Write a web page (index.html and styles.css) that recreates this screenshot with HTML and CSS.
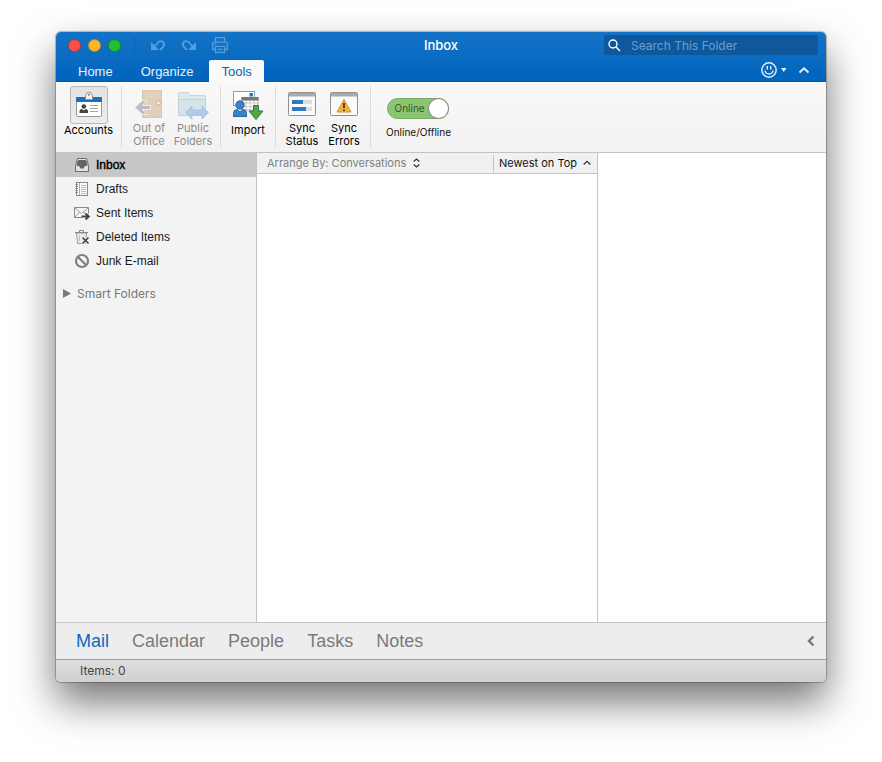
FILE: index.html
```html
<!DOCTYPE html>
<html lang="en">
<head>
  <meta charset="UTF-8">
  <title>Inbox</title>
  <meta name="viewport" content="width=device-width, initial-scale=1.0">
  <link rel="stylesheet" href="styles.css">
</head>
<body>
  <div class="window">

    <!-- Title bar -->
    <header class="header">
      <div class="titlebar">
        <div class="titlebar-left">
          <button class="light red" aria-label="Close"></button>
          <button class="light yellow" aria-label="Minimize"></button>
          <button class="light green" aria-label="Zoom"></button>
          <span class="divider"></span>
          <button class="quick" aria-label="Undo">
            <svg width="16" height="16" viewBox="0 0 16 16" fill="none" stroke="currentColor" stroke-width="1.800"><path d="M1 5V13H9Z" fill="currentColor" stroke="none"/><path d="M4 10 8 5.500Q10.500 3 13 5Q15.500 7.500 13 10L10 13"/></svg>
          </button>
          <button class="quick" aria-label="Redo">
            <svg width="16" height="16" viewBox="0 0 16 16" fill="none" stroke="currentColor" stroke-width="1.800"><path d="M15 5V13H7Z" fill="currentColor" stroke="none"/><path d="M12 10 8 5.500Q5.500 3 3 5Q.5 7.500 3 10L6 13"/></svg>
          </button>
          <button class="quick" aria-label="Print">
            <svg width="16" height="16" viewBox="0 0 16 16" fill="none" stroke="currentColor" stroke-width="1.3"><path d="M3.500 5V.7H12.500V5M3 12.500H.7V6.500Q.7 5.200 2 5.200H14Q15.300 5.200 15.300 6.500V12.500H13M3.500 9.300H12.500V15.300H3.500ZM5.500 12.300H10.500M2.500 7.300H4.500"/></svg>
          </button>
        </div>
        <h1 class="title">Inbox</h1>
        <label class="search">
          <svg width="13" height="13" viewBox="0 0 13 13" fill="none" stroke="#fff" stroke-width="1.4"><circle cx="5" cy="5" r="4"/><path d="M8 8 12 12"/></svg>
          <input type="search" aria-label="Search" placeholder="Search This Folder">
        </label>
      </div>
      <nav class="tabs">
        <button class="tab">Home</button>
        <button class="tab">Organize</button>
        <button class="tab active">Tools</button>
        <div class="tabs-right">
          <button class="feedback" aria-label="Feedback">
            <svg width="26" height="16" viewBox="0 0 26 16" fill="none" stroke="#e6f0fa" stroke-width="1.4"><circle cx="8" cy="8" r="7.200"/><path d="M4 8.500Q4.500 12 8 12T12 8.500M6.300 4V7.500M9.700 4V7.500"/><path d="M20 6H25.500L22.750 10Z" fill="#e6f0fa" stroke="none"/></svg>
          </button>
          <button class="collapse" aria-label="Collapse ribbon">
            <svg width="12" height="8" viewBox="0 0 12 8" fill="none" stroke="#e6f0fa" stroke-width="2"><path d="M1.500 6.500 6 2.300 10.500 6.500"/></svg>
          </button>
        </div>
      </nav>
    </header>

    <!-- Ribbon -->
    <div class="ribbon">
      <div class="group">
        <button class="tool accounts">
          <span class="tool-icon framed">
            <svg width="26" height="28" viewBox="0 0 26 28"><rect x=".5" y="6.500" width="25" height="19" rx="1.500" fill="#fff" stroke="#999"/><path d="M0 7Q0 6 1 6H25Q26 6 26 7V11H0Z" fill="#1c6fbd"/><path d="M9.500 8.500V4.500Q9.500 3.500 10.500 3.500Q10.500 1 13 1T15.500 3.500Q16.500 3.500 16.500 4.500V8.500Z" fill="#f4f4f4" stroke="#909090"/><circle cx="13" cy="3.800" r="1" fill="#777"/><circle cx="7.800" cy="15.500" r="2.300" fill="#444"/><path d="M3.500 22V20Q3.500 18 6 18L7.800 19.500 9.600 18Q12 18 12 20V22Z" fill="#444"/><path d="M14 14.500H22M14 17.500H22M14 20.500H22" stroke="#a5a5a5"/></svg>
          </span>
          <span>Accounts</span>
        </button>
      </div>
      <div class="group">
        <button class="tool" disabled>
          <span class="tool-icon">
            <svg width="30" height="32" viewBox="0 0 30 32"><path d="M8.500 2.500H27.500V29.500H8.500Z" fill="#e0d0b9" stroke="#d9c7ab"/><path d="M11 6H25M12 9H24" stroke="#eadfcd" stroke-dasharray="2 3"/><circle cx="24.500" cy="15" r="1.800" fill="#fff" stroke="#c3b69f"/><path d="M.8 19.500 8.500 12.500H12.500L8.500 17.500H16.500V21.500H8.500L12.500 26.500H8.500Z" fill="#b9bcc1" stroke="#f5f5f5" stroke-width=".8"/></svg>
          </span>
          <span>Out of<br>Office</span>
        </button>
        <button class="tool" disabled>
          <span class="tool-icon">
            <svg width="32" height="32" viewBox="0 0 32 32"><path d="M1.500 27.500V6Q1.500 4.500 3 4.500H11L13 7.500H27Q28.500 7.500 28.500 9V27.500Z" fill="#dde8ec" stroke="#c6d4da"/><path d="M1.500 27.500V11.500H28.500V27.500Z" fill="#d5e3ea" stroke="#c3d3dc"/><path d="M8.500 24.500 15 18V22H25V18L31.500 24.500 25 31V27H15V31Z" fill="#b0cce6" stroke="#9dbedc" stroke-width=".7"/></svg>
          </span>
          <span>Public<br>Folders</span>
        </button>
      </div>
      <div class="group">
        <button class="tool">
          <span class="tool-icon">
            <svg width="32" height="32" viewBox="0 0 32 32"><rect x="1.500" y="2.500" width="21" height="14" fill="#fff" stroke="#999"/><rect x="17.500" y="4" width="3.500" height="3.500" fill="#2b79c2"/><path d="M10 8.500H26V21H10Z" fill="#fff" stroke="#aaa"/><path d="M14 11V21M18 11V21M22 11V21M10 14H26M10 17.500H26" stroke="#c8c8c8"/><path d="M9.500 8H26.500V11.500H9.500Z" fill="#777"/><circle cx="8" cy="16" r="4.200" fill="#3b83c6" stroke="#2567a5"/><path d="M1.500 27.500V24.500Q1.500 20.500 5 20.500L8 23 11 20.500Q14.500 20.500 14.500 24.500V27.500Z" fill="#3b83c6" stroke="#2567a5"/><path d="M21.500 16.500H26.500V22H31L24 30.500 17 22H21.500Z" fill="#55a34d" stroke="#39793a"/></svg>
          </span>
          <span>Import</span>
        </button>
      </div>
      <div class="group sync">
        <button class="tool">
          <span class="tool-icon">
            <svg width="30" height="32" viewBox="0 0 30 32"><rect x="1.500" y="4.500" width="27" height="23" rx="1" fill="#fafafa" stroke="#919191"/><path d="M2 5H28V8.500H2Z" fill="#aaa"/><path d="M5 12H25V16H5ZM5 19H25V23H5Z" fill="#ddd"/><path d="M5 12H16V16H5ZM5 19H19V23H5Z" fill="#3278bd"/></svg>
          </span>
          <span>Sync<br>Status</span>
        </button>
        <button class="tool">
          <span class="tool-icon">
            <svg width="30" height="32" viewBox="0 0 30 32"><rect x="1.500" y="4.500" width="27" height="23" rx="1" fill="#fafafa" stroke="#919191"/><path d="M2 5H28V8.500H2Z" fill="#aaa"/><path d="M15 11.500 22 24H8Z" fill="#f2b540" stroke="#d18e2a" stroke-linejoin="round"/><path d="M15 15V20M15 21.500V23" stroke="#4a3518" stroke-width="1.800"/></svg>
          </span>
          <span>Sync<br>Errors</span>
        </button>
      </div>
      <div class="group online">
        <div class="switch">
          <input type="checkbox" id="online" checked>
          <span class="switch-text">Online</span>
        </div>
        <label for="online">Online/Offline</label>
      </div>
    </div>

    <!-- Folders, message list and reading pane -->
    <main class="content">
      <aside class="sidebar">
        <ul class="folders">
          <li><a href="#" class="folder selected">
            <svg width="16" height="16" viewBox="0 0 16 16"><path d="M3.500 1.500H12.500L14.500 9V14.500H1.500V9Z" fill="#e2e2e2" stroke="#6c6c6c"/><path d="M5 3H11Q12.500 3 12.700 5L13.200 9H11L9.500 11.500H6.500L5 9H2.800L3.300 5Q3.500 3 5 3Z" fill="#5f6468"/></svg>
            Inbox</a></li>
          <li><a href="#" class="folder">
            <svg width="16" height="16" viewBox="0 0 16 16"><rect x="2.500" y="1.500" width="11" height="13" fill="#fafafa" stroke="#888"/><path d="M5.500 2V14" stroke="#aaa"/><path d="M7 4.500H12M7 6.500H12M7 8.500H12M7 10.500H12M7 12.500H12" stroke="#bbb"/><path d="M1.500 3.500H4M1.500 5.500H4M1.500 7.500H4M1.500 9.500H4M1.500 11.500H4" stroke="#777" stroke-width=".8"/></svg>
            Drafts</a></li>
          <li><a href="#" class="folder">
            <svg width="16" height="16" viewBox="0 0 16 16" fill="none"><path d="M.5 2.500H14.500V12.500H.5Z" fill="#f7f7f7" stroke="#888"/><path d="M1 3 7.500 8.500 14 3M1 12 5.500 7M14 12 9.500 7" stroke="#999"/><path d="M8 11.500H14.500M11.500 8.500 14.800 11.500 11.500 14.800" stroke="#f3f3f3" stroke-width="4"/><path d="M7.500 11.500H14.500M11.500 8.500 14.800 11.500 11.500 14.500" stroke="#444" stroke-width="1.800"/></svg>
            Sent Items</a></li>
          <li><a href="#" class="folder">
            <svg width="16" height="16" viewBox="0 0 16 16" fill="none"><path d="M2.500 4 3.500 14.500H11.500L12.500 4Z" fill="#ececec" stroke="#999"/><path d="M1 3.500H14M5.500 3V1.500H9.500V3" stroke="#888"/><path d="M5.500 6V12" stroke="#bbb"/><path d="M8 8 15 15M15 8 8 15" stroke="#f3f3f3" stroke-width="3.500"/><path d="M8.500 8.500 14.500 14.500M14.500 8.500 8.500 14.500" stroke="#444" stroke-width="1.700"/></svg>
            Deleted Items</a></li>
          <li><a href="#" class="folder">
            <svg width="16" height="16" viewBox="0 0 16 16" fill="none" stroke="#808080" stroke-width="2.200"><circle cx="8" cy="8" r="6"/><path d="M4 4 12 12"/></svg>
            Junk E-mail</a></li>
        </ul>
        <button class="smart">
          <svg width="8" height="9" viewBox="0 0 8 9"><path d="M0 0 8 4.500 0 9Z" fill="#7a7a7a"/></svg>
          Smart Folders
        </button>
      </aside>

      <section class="messages">
        <div class="list-header">
          <button class="arrange">Arrange By: Conversations
            <svg width="7" height="10" viewBox="0 0 7 10" fill="none" stroke="#333" stroke-width="1.300"><path d="M.7 3.500 3.500 1 6.300 3.500M.7 6.500 3.500 9 6.300 6.500"/></svg>
          </button>
          <button class="sort">Newest on Top
            <svg width="8" height="6" viewBox="0 0 8 6" fill="none" stroke="#333" stroke-width="1.300"><path d="M.7 4.500 4 1.300 7.300 4.500"/></svg>
          </button>
        </div>
      </section>

      <section class="reading"></section>
    </main>

    <!-- Module switcher -->
    <nav class="modules">
      <a href="#" class="current">Mail</a>
      <a href="#">Calendar</a>
      <a href="#">People</a>
      <a href="#">Tasks</a>
      <a href="#">Notes</a>
      <button class="compact" aria-label="Compact navigation">
        <svg width="8" height="12" viewBox="0 0 8 12" fill="none" stroke="#777" stroke-width="2.400"><path d="M6.500 1.500 2 6 6.500 10.500"/></svg>
      </button>
    </nav>

    <footer class="status">Items: 0</footer>
  </div>
</body>
</html>
```

FILE: styles.css
```css
* {
  box-sizing: border-box;
  margin: 0;
  padding: 0;
}

body {
  background: #fff;
  min-height: 100vh;
  padding: 32px 56px 80px;
  display: flex;
  font-family: Inter, "Liberation Sans", sans-serif;
  font-size: 11px;
  color: #111;
}

button,
input {
  font: inherit;
  color: inherit;
  background: none;
  border: none;
}

svg {
  display: block;
  flex-shrink: 0;
}

a {
  color: inherit;
  text-decoration: none;
}

.window {
  flex: 1;
  min-width: 0;
  display: flex;
  flex-direction: column;
  border-radius: 5px;
  overflow: hidden;
  box-shadow: 0 0 1px 1px rgba(0, 0, 0, 0.25), 0 20px 40px rgba(0, 0, 0, 0.55);
}

/* Title bar */
.header {
  background: linear-gradient(#1373c7, #0064bd);
  box-shadow: inset 0 -1px #0059ab;
  color: #fff;
}

.titlebar {
  height: 28px;
  padding-bottom: 2px;
  display: grid;
  grid-template-columns: 1fr auto 1fr;
  align-items: center;
}

.titlebar-left {
  display: flex;
  align-items: center;
  padding-left: 12px;
  gap: 7px;
}

.light {
  width: 13px;
  height: 13px;
  border-radius: 50%;
  border: 1px solid rgba(0, 0, 0, 0.25);
}

.red {
  background: #ff5048;
}

.yellow {
  background: #ffb52b;
}

.green {
  background: #21c131;
}

.divider {
  width: 1px;
  height: 16px;
  margin: 0 8px 0 6px;
  background: #0d62ad;
}

.quick {
  width: 16px;
  margin-right: 8px;
  color: #5b9cd8;
}

.title {
  font-size: 13px;
  font-weight: 500;
}

.search {
  justify-self: end;
  width: 214px;
  height: 20px;
  margin-right: 8px;
  padding: 0 4px;
  display: flex;
  align-items: center;
  gap: 10px;
  background: #0f589b;
  border-radius: 2px;
}

.search input {
  flex: 1;
  min-width: 0;
  font-size: 12px;
  outline: none;
}

.search input::placeholder {
  color: #6c9fd0;
}

.tabs {
  display: flex;
  gap: 4px;
  padding-left: 10px;
}

.tab {
  height: 22px;
  padding: 0 12px;
  font-family: "Liberation Sans", Arial, sans-serif;
  font-size: 13px;
  color: #e6f0fa;
}

.tab.active {
  background: #fafafa;
  color: #0c63b0;
  border-radius: 2px 2px 0 0;
}

.tabs-right {
  margin-left: auto;
  padding-right: 16px;
  display: flex;
  align-items: center;
  height: 19px;
  gap: 11px;
}

/* Ribbon */
.ribbon {
  height: 70px;
  display: flex;
  padding-top: 4px;
  background: linear-gradient(#f8f8f8, #f2f2f2);
}

.group {
  display: flex;
  height: 62px;
  padding: 0 5px;
  border-right: 1px solid #dcdcdc;
}

.tool {
  width: 44px;
  display: flex;
  flex-direction: column;
  align-items: center;
  line-height: 13px;
  color: #000;
}

.accounts {
  width: 55px;
}

.sync .tool {
  width: 42px;
}

.tool-icon {
  width: 38px;
  height: 38px;
  display: flex;
  align-items: center;
  justify-content: center;
}

.framed {
  border: 1px solid #b9b9b9;
  border-radius: 3px;
  background: linear-gradient(#e2e2e2, #ededed);
}

.tool:disabled {
  color: #8b8b8b;
}

.online {
  flex-direction: column;
  align-items: center;
  padding: 12px 15px 0;
  border-right: none;
  font-size: 10px;
  line-height: 14px;
}

.switch {
  position: relative;
  margin-bottom: 6px;
}

.switch input {
  appearance: none;
  display: block;
  width: 62px;
  height: 21px;
  border-radius: 11px;
  border: 1px solid #79ab62;
  background: #8cc572;
}

.switch input::after {
  content: "";
  display: block;
  width: 19px;
  height: 19px;
  margin-left: auto;
  border-radius: 50%;
  background: #fff;
  box-shadow: 0 0 0 1px #8a8a8a;
}

.switch input:not(:checked)::after {
  margin-left: 0;
}

.switch-text {
  position: absolute;
  left: 7px;
  top: 3px;
  color: #31572a;
  pointer-events: none;
}

/* Main area */
.content {
  flex: 1;
  display: flex;
  border-top: 1px solid #c3c3c3;
  background: #fff;
}

.sidebar {
  width: 201px;
  border-right: 1px solid #c3c3c3;
  background: #f3f3f3;
}

.folders {
  list-style: none;
  margin-bottom: 8px;
}

.folder {
  height: 24px;
  display: flex;
  align-items: center;
  gap: 6px;
  padding-left: 18px;
  font-family: "Liberation Sans", Arial, sans-serif;
  font-size: 12px;
  color: #1a1a1a;
}

.folder.selected {
  background: #c7c7c7;
  color: #000;
  -webkit-text-stroke: 0.4px #000;
}

.smart {
  height: 24px;
  display: flex;
  align-items: center;
  gap: 6px;
  padding-left: 7px;
  font-size: 12px;
  color: #777;
}

.messages {
  width: 341px;
  border-right: 1px solid #c3c3c3;
}

.list-header {
  height: 21px;
  display: flex;
  align-items: center;
  justify-content: space-between;
  background: #f1f1f1;
  border-bottom: 1px solid #c3c3c3;
}

.arrange,
.sort {
  display: flex;
  align-items: center;
}

.arrange {
  gap: 7px;
  padding-left: 10px;
  color: #808080;
}

.sort {
  height: 17px;
  gap: 6px;
  padding: 0 6px 0 5px;
  border-left: 1px solid #c3c3c3;
}

.reading {
  flex: 1;
}

/* Bottom bars */
.modules {
  height: 37px;
  display: flex;
  align-items: center;
  gap: 23px;
  padding: 0 11px 0 20px;
  background: #ededed;
  border-top: 1px solid #c3c3c3;
  font-family: "Liberation Sans", Arial, sans-serif;
  font-size: 18px;
  color: #7a7a7a;
}

.current {
  color: #0a6abf;
}

.compact {
  margin-left: auto;
}

.status {
  height: 23px;
  padding-left: 24px;
  border-top: 1px solid #9a9a9a;
  background: linear-gradient(#dedede, #d0d0d0);
  font-size: 12px;
  line-height: 22px;
  color: #444;
}
```
